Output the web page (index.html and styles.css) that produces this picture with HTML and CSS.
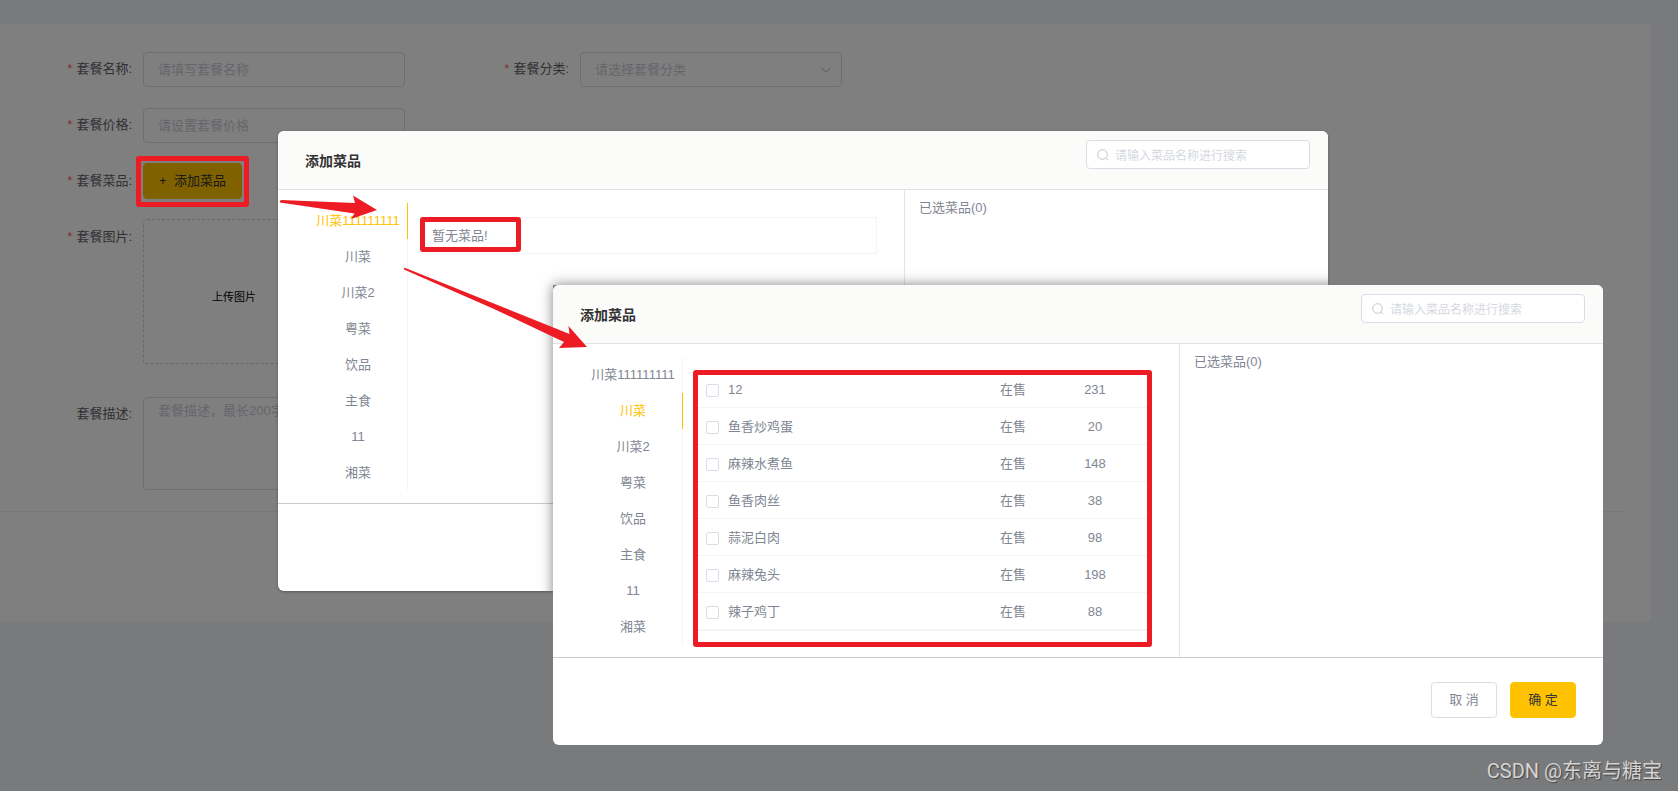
FILE: index.html
```html
<!DOCTYPE html>
<html lang="zh-CN">
<head>
<meta charset="utf-8">
<title>添加菜品</title>
<link rel="stylesheet" href="styles.css">
</head>
<body>
<main class="page">
  <form class="panel">
    <div class="form-row">
      <label class="form-label required" for="name">套餐名称:</label>
      <input class="field" id="name" type="text" placeholder="请填写套餐名称">
      <label class="form-label form-label-second required" for="category">套餐分类:</label>
      <div class="select-wrap">
        <select class="field" id="category"><option>请选择套餐分类</option></select>
        <svg class="chevron" viewBox="0 0 12 8" aria-hidden="true"><path d="M1.500 1.500 6 6.200 10.500 1.500"/></svg>
      </div>
    </div>
    <div class="form-row">
      <label class="form-label required" for="price">套餐价格:</label>
      <input class="field" id="price" type="text" placeholder="请设置套餐价格">
    </div>
    <div class="form-row">
      <span class="form-label required">套餐菜品:</span>
      <button class="btn btn-primary btn-add" type="button">+&nbsp; 添加菜品</button>
    </div>
    <div class="form-row form-row-upload">
      <span class="form-label required">套餐图片:</span>
      <button class="upload" type="button">上传图片</button>
    </div>
    <div class="form-row">
      <label class="form-label" for="desc">套餐描述:</label>
      <textarea class="field textarea" id="desc" placeholder="套餐描述，最长200字"></textarea>
    </div>
    <hr class="divider">
  </form>
</main>
<div class="mask"></div>

<section class="dialog dialog-back">
  <header class="dialog-head">
    <h2 class="dialog-title">添加菜品</h2>
    <div class="search">
      <svg class="search-icon" viewBox="0 0 12 12" aria-hidden="true"><circle cx="5.500" cy="5.500" r="4.800"/><path d="M8.800 9 11 11.300"/></svg>
      <input class="search-input" type="text" aria-label="搜索菜品" placeholder="请输入菜品名称进行搜索">
    </div>
  </header>
  <div class="dialog-body">
    <nav class="cats">
      <button class="cat cat-active" type="button">川菜111111111</button>
      <button class="cat" type="button">川菜</button>
      <button class="cat" type="button">川菜2</button>
      <button class="cat" type="button">粤菜</button>
      <button class="cat" type="button">饮品</button>
      <button class="cat" type="button">主食</button>
      <button class="cat" type="button">11</button>
      <button class="cat" type="button">湘菜</button>
    </nav>
    <div class="dishes"><p class="empty">暂无菜品!</p></div>
    <aside class="chosen">已选菜品(0)</aside>
  </div>
  <footer class="dialog-foot"></footer>
</section>

<section class="dialog dialog-front">
  <header class="dialog-head">
    <h2 class="dialog-title">添加菜品</h2>
    <div class="search">
      <svg class="search-icon" viewBox="0 0 12 12" aria-hidden="true"><circle cx="5.500" cy="5.500" r="4.800"/><path d="M8.800 9 11 11.300"/></svg>
      <input class="search-input" type="text" aria-label="搜索菜品" placeholder="请输入菜品名称进行搜索">
    </div>
  </header>
  <div class="dialog-body">
    <nav class="cats">
      <button class="cat" type="button">川菜111111111</button>
      <button class="cat cat-active" type="button">川菜</button>
      <button class="cat" type="button">川菜2</button>
      <button class="cat" type="button">粤菜</button>
      <button class="cat" type="button">饮品</button>
      <button class="cat" type="button">主食</button>
      <button class="cat" type="button">11</button>
      <button class="cat" type="button">湘菜</button>
    </nav>
    <div class="dishes">
      <table class="dish-table">
        <tr><td><label class="dish"><input class="check" type="checkbox">12</label></td><td class="status">在售</td><td class="price">231</td></tr>
        <tr><td><label class="dish"><input class="check" type="checkbox">鱼香炒鸡蛋</label></td><td class="status">在售</td><td class="price">20</td></tr>
        <tr><td><label class="dish"><input class="check" type="checkbox">麻辣水煮鱼</label></td><td class="status">在售</td><td class="price">148</td></tr>
        <tr><td><label class="dish"><input class="check" type="checkbox">鱼香肉丝</label></td><td class="status">在售</td><td class="price">38</td></tr>
        <tr><td><label class="dish"><input class="check" type="checkbox">蒜泥白肉</label></td><td class="status">在售</td><td class="price">98</td></tr>
        <tr><td><label class="dish"><input class="check" type="checkbox">麻辣兔头</label></td><td class="status">在售</td><td class="price">198</td></tr>
        <tr><td><label class="dish"><input class="check" type="checkbox">辣子鸡丁</label></td><td class="status">在售</td><td class="price">88</td></tr>
      </table>
    </div>
    <aside class="chosen">已选菜品(0)</aside>
  </div>
  <footer class="dialog-foot">
    <button class="btn btn-foot" type="button">取 消</button>
    <button class="btn btn-foot btn-primary" type="button">确 定</button>
  </footer>
</section>

<div class="mark mark-button"></div>
<div class="mark mark-empty"></div>
<div class="mark mark-list"></div>
<svg class="arrow arrow-one" viewBox="0 0 98 26" aria-hidden="true"><polygon points="0,6 1,5 75,8 73,0.500 97,15 71,24 74.500,18.500 0,7.500"/></svg>
<svg class="arrow arrow-two" viewBox="0 0 184 82" aria-hidden="true"><polygon points="0,0 2,0.300 165.500,66 164.500,58 183,79 155,80 160,74 90,41 0,1.600"/></svg>
<p class="watermark">CSDN @东离与糖宝</p>
</body>
</html>
```

FILE: styles.css
```css
* { box-sizing: border-box; }

body {
  margin: 0;
  position: relative;
  min-height: 100vh;
  overflow: hidden;
  background: #f3f5f8;
  color: #818693;
  font: 13px/20px "Liberation Sans", "Noto Sans CJK SC", sans-serif;
}

button, input, select, textarea { font: inherit; color: inherit; }
button { cursor: pointer; }
p, h2 { margin: 0; }

/* Form page */
.page { padding: 24px 27px 0 0; }
.panel {
  min-height: 598px;
  padding: 27px 27px 0 0;
  background: #fff;
  border-radius: 0 4px 4px 0;
}
.form-row { display: flex; align-items: flex-start; min-height: 36px; margin-bottom: 20px; }
.form-row-upload { margin-bottom: 32px; }
.form-label {
  width: 143px;
  padding-right: 11px;
  line-height: 35px;
  text-align: right;
  color: #606266;
}
.form-label-second { width: 175px; }
.required::before { content: "*"; margin-right: 4px; color: #f56c6c; }
.field {
  width: 262px;
  height: 35px;
  margin: 1px 0 0;
  padding: 0 14px;
  border: 1px solid #d8dde3;
  border-radius: 4px;
  background: #fff;
  outline: none;
}
.field::placeholder { color: #c9cdd4; opacity: 1; }
.select-wrap { position: relative; }
.select-wrap .field { display: block; appearance: none; color: #c9cdd4; }
.chevron {
  position: absolute;
  top: 15px;
  right: 10px;
  width: 12px;
  height: 8px;
  fill: none;
  stroke: #b4b8c0;
}
.textarea { height: 93px; padding: 3px 14px; resize: none; }
.upload {
  width: 182px;
  height: 145px;
  padding: 10px 0 0;
  border: 1px dashed #d0d0d0;
  border-radius: 4px;
  background: #fff;
  color: #000;
  font-size: 11px;
}
.divider { margin: 21px 0 0; border: 0; border-top: 1px solid #f0f0f2; }
.mask { position: absolute; inset: 0; background: rgba(0, 0, 0, 0.5); }

/* Buttons */
.btn {
  height: 36px;
  padding: 0;
  border: 1px solid #d8dde6;
  border-radius: 4px;
  background: #fff;
}
.btn-primary { border-color: #ffc200; background: #ffc200; color: #333; }
.btn-add { width: 99px; }
.btn-foot { width: 66px; }

/* Dialog */
.dialog {
  position: absolute;
  width: 1050px;
  overflow: hidden;
  border-radius: 6px;
  background: #fff;
}
.dialog-back { left: 278px; top: 131px; box-shadow: 0 1px 3px rgba(0, 0, 0, 0.3); }
.dialog-back::after {
  content: "";
  position: absolute;
  left: 275px;
  top: 154px;
  width: 1050px;
  height: 460px;
  background: #808080;
  box-shadow: 0 0 12px rgba(0, 0, 0, 0.5);
}
.dialog-front { left: 553px; top: 285px; }
.dialog-head {
  display: flex;
  justify-content: space-between;
  height: 59px;
  padding: 9px 18px 0 27px;
  border-bottom: 1px solid #e2e2e4;
  background: #fbfbfa;
}
.dialog-title { padding-top: 11px; color: #333; font-size: 14px; line-height: 20px; font-weight: 700; }
.search {
  display: flex;
  align-items: center;
  gap: 6px;
  width: 224px;
  height: 29px;
  padding: 0 10px;
  border: 1px solid #d8dde6;
  border-radius: 4px;
  background: #fff;
}
.search-icon { width: 12px; height: 12px; flex: none; fill: none; stroke: #c0c4cc; }
.search-input {
  flex: 1;
  min-width: 0;
  padding: 2px 0 0;
  border: 0;
  background: none;
  font-size: 12px;
  outline: none;
}
.search-input::placeholder { color: #d5d8df; opacity: 1; }

.dialog-body { display: flex; height: 313px; padding-left: 31px; }
.cats {
  flex: none;
  width: 99px;
  margin: 13px 0;
  border-right: 1px solid #f3f4f7;
}
.cat {
  display: block;
  width: 99px;
  height: 36px;
  padding: 0;
  border: 0;
  border-right: 1px solid transparent;
  background: none;
  white-space: nowrap;
}
.cat-active { border-right-color: #ffc200; color: #ffc200; }
.dishes { flex: none; width: 497px; padding: 27px 27px 0 13px; border-right: 1px solid #e4e4ea; }
.empty { height: 37px; padding-left: 10px; border: 1px solid #f3f4f7; line-height: 35px; }
.dish-table {
  width: 100%;
  border-collapse: separate;
  border-spacing: 0;
  border: 1px solid #f3f4f7;
  border-top: 0;
}
.dish-table td { height: 37px; padding: 1px 0 0; border-bottom: 1px solid #f3f4f7; }
.dish { display: flex; align-items: center; gap: 9px; padding-left: 9px; }
.check {
  appearance: none;
  width: 13px;
  height: 13px;
  margin: 2px 0 0;
  border: 1px solid #d8dde6;
  border-radius: 2px;
  background: #fff;
}
.status { width: 82px; text-align: center; }
.dish-table .price { width: 97px; padding-right: 15px; text-align: center; }
.chosen { flex: 1; padding: 8px 14px; }
.dialog-foot {
  display: flex;
  justify-content: flex-end;
  gap: 13px;
  height: 88px;
  padding: 24px 27px 0;
  border-top: 1px solid #ccc;
}

/* Annotations */
.mark { position: absolute; border: 5px solid #ed1c24; border-radius: 3px; }
.mark-button { left: 136px; top: 156px; width: 113px; height: 51px; }
.mark-empty { left: 420px; top: 217px; width: 101px; height: 35px; }
.mark-list { left: 693px; top: 370px; width: 459px; height: 277px; }
.arrow { position: absolute; fill: #ed1c24; }
.arrow-one { left: 280px; top: 195px; width: 98px; height: 26px; }
.arrow-two { left: 404px; top: 268px; width: 184px; height: 82px; }
.watermark {
  position: absolute;
  right: 16px;
  bottom: 6px;
  color: #d4d4d4;
  font: 20px/28px Roboto, "Noto Sans CJK SC", sans-serif;
  text-shadow: 1px 1px 1px #444;
}
```
